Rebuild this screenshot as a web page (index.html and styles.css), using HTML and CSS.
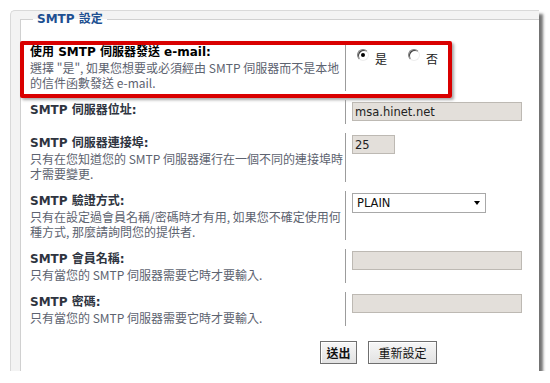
FILE: index.html
```html
<!DOCTYPE html>
<html lang="zh-Hant">

<head>
  <meta charset="UTF-8" />
  <meta name="viewport" content="width=device-width, initial-scale=1.0" />
  <title>SMTP 設定</title>
  <link rel="stylesheet" href="styles.css">
</head>

<body>
  <div class="frame">
    <fieldset class="smtp">
      <legend>SMTP 設定</legend>

      <div class="rows">
        <div class="row row-first">
          <div class="label">
            <div class="title title-strong">使用 SMTP 伺服器發送 e-mail:</div>
            <div class="desc">選擇 "是", 如果您想要或必須經由 SMTP 伺服器而不是本地的信件函數發送 e-mail.</div>
          </div>
          <div class="value">
            <label class="radio"><span class="dot checked"></span><span class="radio-text">是</span></label>
            <label class="radio"><span class="dot"></span><span class="radio-text">否</span></label>
          </div>
          <!-- highlight drawn over the first row -->
          <div class="highlight"></div>
        </div>

        <div class="row">
          <div class="label">
            <div class="title">SMTP 伺服器位址:</div>
          </div>
          <div class="value">
            <input class="field field-wide" type="text" value="msa.hinet.net">
          </div>
        </div>

        <div class="row">
          <div class="label">
            <div class="title">SMTP 伺服器連接埠:</div>
            <div class="desc">只有在您知道您的 SMTP 伺服器運行在一個不同的連接埠時才需要變更.</div>
          </div>
          <div class="value">
            <input class="field field-port" type="text" value="25">
          </div>
        </div>

        <div class="row">
          <div class="label">
            <div class="title">SMTP 驗證方式:</div>
            <div class="desc">只有在設定過會員名稱/密碼時才有用, 如果您不確定使用何種方式, 那麼請詢問您的提供者.</div>
          </div>
          <div class="value">
            <div class="select">
              <select>
                <option>PLAIN</option>
                <option>LOGIN</option>
              </select>
            </div>
          </div>
        </div>

        <div class="row">
          <div class="label">
            <div class="title">SMTP 會員名稱:</div>
            <div class="desc">只有當您的 SMTP 伺服器需要它時才要輸入.</div>
          </div>
          <div class="value">
            <input class="field field-wide" type="text" value="">
          </div>
        </div>

        <div class="row">
          <div class="label">
            <div class="title">SMTP 密碼:</div>
            <div class="desc">只有當您的 SMTP 伺服器需要它時才要輸入.</div>
          </div>
          <div class="value">
            <input class="field field-wide" type="password" value="">
          </div>
        </div>
      </div>

      <div class="actions">
        <button class="btn btn-submit">送出</button>
        <button class="btn btn-reset">重新設定</button>
      </div>
    </fieldset>
  </div>
</body>

</html>
```

FILE: styles.css
```css
body {
  margin: 0;
  background: #fff;
  font-family: "DejaVu Sans", "Noto Sans CJK TC", sans-serif;
  font-size: 12px;
  color: #2e3440;
}

.frame {
  margin: 10px 0 0 10px;
  width: 529px;
  height: 361px;
  box-sizing: border-box;
  padding: 1px 0 0 9px;
  background: #f3f3f3;
  border-top: 1px solid #d9d9d9;
  border-left: 1px solid #d9d9d9;
  border-top-left-radius: 5px;
  box-shadow: 4px 4px 3px rgba(0, 0, 0, 0.55);
  display: flex;
  flex-direction: column;
  overflow: hidden;
}

.smtp {
  flex: 1;
  min-width: 0;
  margin: 0;
  padding: 15px 0 0 0;
  background: #fff;
  border: 1px solid #d0d0d0;
  border-right: none;
  border-bottom: none;
}

.smtp legend {
  margin-left: 12px;
  padding: 0 4px;
  font-weight: bold;
  line-height: 15px;
  color: #1d4f91;
}

/* ========= Rows ========= */

.row {
  position: relative;
  display: flex;
  margin-bottom: 9px;
}

.row:last-child {
  margin-bottom: 0;
}

.label {
  flex: none;
  width: 324px;
  box-sizing: border-box;
  padding: 3px 0 1px 9px;
}

.title {
  font-weight: bold;
  line-height: 15px;
  color: #2e3440;
}

.title-strong {
  color: #000;
}

.desc {
  margin-right: -3px;
  font-family: "Noto Sans CJK TC", sans-serif;
  line-height: 15px;
  color: #5d6370;
}

.value {
  flex: 1;
  border-left: 1px solid #9c9c9c;
  padding: 2px 0 3px 6px;
}

.row-first .value {
  padding-top: 7px;
  display: flex;
  align-items: flex-start;
}

.highlight {
  position: absolute;
  left: -1px;
  top: -1px;
  width: 432px;
  height: 57px;
  box-sizing: border-box;
  border: 4px solid #d90000;
  border-radius: 2px;
  box-shadow: 2px 2px 3px rgba(0, 0, 0, 0.35);
  pointer-events: none;
}

/* ========= Radio ========= */

.radio {
  display: flex;
  align-items: flex-start;
  gap: 6px;
  margin-left: 5px;
  margin-right: 16px;
}

.dot {
  position: relative;
  width: 12px;
  height: 12px;
  box-sizing: border-box;
  border-radius: 50%;
  background: #fff;
  border: 1px solid;
  border-color: #808080 #eeeeee #eeeeee #808080;
  box-shadow: inset 1px 1px 0 #404040;
}

.dot.checked::after {
  content: "";
  position: absolute;
  left: 3px;
  top: 3px;
  width: 4px;
  height: 4px;
  border-radius: 50%;
  background: #000;
}

.radio-text {
  margin-top: 2px;
  font-family: "Noto Sans CJK TC", sans-serif;
  font-size: 12px;
  line-height: 15px;
  color: #222;
}

/* ========= Fields ========= */

.field {
  display: block;
  box-sizing: border-box;
  height: 19px;
  margin: 0;
  padding: 0 2px;
  font-family: "DejaVu Sans", sans-serif;
  font-size: 11.5px;
  color: #222;
  background: #e3dfda;
  border: 1px solid #bdb9b3;
  outline: none;
}

.field-wide {
  width: 170px;
}

.field-port {
  width: 43px;
}

.select {
  position: relative;
  width: 134px;
}

.select select {
  display: block;
  width: 100%;
  height: 20px;
  margin: 0;
  padding: 0 0 0 4px;
  font-family: "DejaVu Sans", sans-serif;
  font-size: 11.5px;
  color: #111;
  background: #fff;
  border: 1px solid #a8a8a8;
  border-radius: 0;
  appearance: none;
  -webkit-appearance: none;
}

.select::after {
  content: "";
  position: absolute;
  right: 6px;
  top: 8px;
  border-left: 3.5px solid transparent;
  border-right: 3.5px solid transparent;
  border-top: 4px solid #000;
}

/* ========= Buttons ========= */

.actions {
  display: flex;
  gap: 11px;
  margin-top: 15px;
  padding-left: 299px;
}

.btn {
  height: 23px;
  padding: 0;
  font-family: "Noto Sans CJK TC", sans-serif;
  font-size: 12px;
  color: #111;
  background: linear-gradient(#f7f7f7, #e2e2e2);
  border: 1px solid #6f6f6f;
  box-shadow: inset 1px 1px 0 #fff;
  cursor: pointer;
}

.btn-submit {
  width: 37px;
  font-weight: bold;
}

.btn-reset {
  width: 69px;
}
```
